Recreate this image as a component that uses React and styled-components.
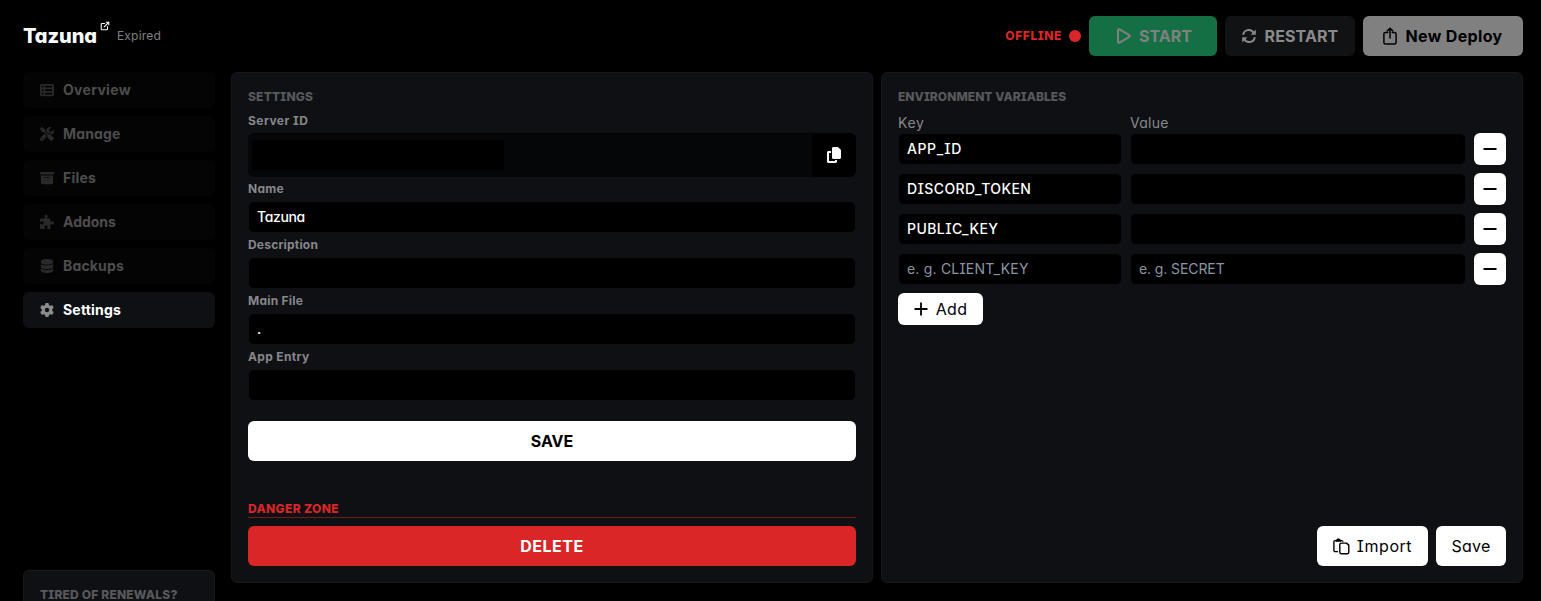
import React from "react";
import styled, { createGlobalStyle } from "styled-components";
import {
  FaTableList,
  FaScrewdriverWrench,
  FaBoxArchive,
  FaPuzzlePiece,
  FaDatabase,
  FaGear,
  FaCopy,
} from "react-icons/fa6";
import { FiExternalLink } from "react-icons/fi";

const Global = createGlobalStyle`
  * { box-sizing: border-box; }
  html, body { margin: 0; background: #000; height: 100%; overflow: hidden; }
  body, input, button {
    font-family: Inter, "Noto Sans", sans-serif;
  }
  button { border: 0; padding: 0; margin: 0; cursor: pointer; }
  svg { display: block; flex: none; }
`;

const Page = styled.div`
  height: 601px;
  overflow: hidden;
  padding: 16px 18px 0 23px;
  color: #fff;
`;

const Header = styled.header`
  height: 40px;
  display: flex;
  align-items: center;
`;

/* Text run with its own tracking; single-storey a and serif capital I. */
const Label = styled.span`
  display: block;
  white-space: nowrap;
  font-size: ${(p) => p.$size || 14}px;
  line-height: ${(p) => p.$line || 20}px;
  font-weight: ${(p) => p.$weight || 400};
  letter-spacing: ${(p) => p.$track || 0}px;
  color: ${(p) => p.$color || "inherit"};
  font-feature-settings: "cv11", "cv08";
`;

const Brand = styled.div`
  display: flex;
  align-items: center;
  flex: 1;
`;

const OpenLink = styled.span`
  align-self: flex-start;
  margin: -1px 7px 0 3px;
`;

const Status = styled.div`
  display: flex;
  align-items: center;
  gap: 7px;
  margin-right: 8px;
`;

const Dot = styled.i`
  width: 12px;
  height: 12px;
  border-radius: 50%;
  background: #da2626;
`;

const Actions = styled.div`
  display: flex;
  gap: 8px;
`;

const Button = styled.button`
  display: flex;
  align-items: center;
  justify-content: center;
  gap: ${(p) => p.$gap || 7}px;
  width: ${(p) => (p.$width ? p.$width + "px" : "100%")};
  height: ${(p) => p.$height || 40}px;
  flex: none;
  border-radius: 6px;
  background: ${(p) => p.$bg || "#fff"};
  color: ${(p) => p.$color || "#000"};
`;

const StartButton = styled(Button)`
  padding-left: 3px;
`;

const SaveButton = styled(Button)`
  margin-top: 20px;
`;

const AddButton = styled(Button)`
  margin-top: 8px;
`;

const CopyButton = styled(Button)`
  border-radius: 0 6px 6px 0;
`;

const Body = styled.div`
  display: grid;
  grid-template-columns: 200px 642px 642px;
  column-gap: 8px;
  margin-top: 16px;
`;

const Sidebar = styled.aside`
  display: flex;
  flex-direction: column;
  height: 529px;
  width: 192px;
`;

const Nav = styled.nav`
  display: flex;
  flex-direction: column;
  gap: 8px;
  flex: 1;
`;

const NavItem = styled.a`
  display: flex;
  align-items: center;
  gap: 9px;
  height: 36px;
  padding-left: 17px;
  border-radius: 6px;
  background: ${(p) => (p.$active ? "#0f1014" : "#040404")};
  color: ${(p) => (p.$active ? "#fff" : "#4d4d4d")};
  svg { color: ${(p) => (p.$active ? "#8c8c8d" : "#292929")}; }
`;

const Promo = styled.div`
  height: 31px;
  overflow: hidden;
  border: 1px solid #18191d;
  border-bottom: 0;
  border-radius: 6px 6px 0 0;
  background: #0f1014;
  padding: 16px 16px 0;
`;

const Panel = styled.section`
  height: 511px;
  display: flex;
  flex-direction: column;
  border: 1px solid #16171b;
  border-radius: 6px;
  background: #0f1014;
  padding: 16px;
`;

const Field = styled.label`
  display: flex;
  flex-direction: column;
  height: 56px;
`;

const ServerField = styled(Field)`
  height: 72px;
  padding-top: 4px;
`;

const Input = styled.input`
  display: block;
  width: 100%;
  min-width: 0;
  height: 32px;
  border: 1px solid #0f1014;
  border-radius: 6px;
  outline: 0;
  background: #000;
  color: #fff;
  padding: 0 8px 1px;
  font-size: 14px;
  font-weight: 500;
  letter-spacing: ${(p) => p.$track || 0}px;
  font-feature-settings: "cv11", "cv08";
  &::placeholder {
    color: #8b96a5;
    opacity: 1;
    font-weight: 400;
    letter-spacing: ${(p) => p.$hintTrack || 0}px;
  }
`;

const ServerId = styled.div`
  display: flex;
  align-items: center;
  height: 44px;
  border-radius: 6px;
  overflow: hidden;
  background: #050608;
`;

const Redacted = styled.div`
  width: 252px;
  height: 30px;
  margin: 0 auto 0 4px;
  background: #000;
`;

const DangerTitle = styled.div`
  margin: 40px 0 8px;
  height: 17px;
  border-bottom: 1px solid #6f1c1f;
`;

const VarGrid = styled.div`
  display: grid;
  grid-template-columns: 224px 336px 32px;
  column-gap: 8px;
  row-gap: 8px;
`;

const VarHead = styled(VarGrid)`
  height: 20px;
  margin-top: 8px;
`;

const Footer = styled.div`
  display: flex;
  justify-content: flex-end;
  gap: 8px;
  margin-top: auto;
`;

const PlayIcon = () => (
  <svg width="14" height="16" viewBox="0 0 14 16" fill="none" stroke="currentColor" strokeWidth="2" strokeLinejoin="round">
    <path d="M1 2.2v11.6c0 .8.8 1.2 1.5.8l9.8-5.8c.7-.4.7-1.2 0-1.6L2.5 1.4C1.8 1 1 1.4 1 2.2Z" />
  </svg>
);

const RestartIcon = () => (
  <svg width="14" height="14" viewBox="0 0 14 14" fill="none" stroke="currentColor" strokeWidth="2">
    <path d="M1.2 5.9A5.6 5.6 0 0 1 11.5 3.6" />
    <path d="M12.8 8.1A5.6 5.6 0 0 1 2.5 10.4" />
    <path d="M13.8.6v5.100H8.700Z" fill="currentColor" stroke="none" />
    <path d="M.2 13.400V8.300h5.100Z" fill="currentColor" stroke="none" />
  </svg>
);

const ShareIcon = () => (
  <svg width="14" height="18" viewBox="0 0 14 18" fill="none" stroke="currentColor" strokeWidth="1.500" strokeLinecap="round" strokeLinejoin="round">
    <path d="M4.700 5.500H2.500C1.500 5.500.9 6.100.9 7v8.500c0 .9.6 1.500 1.600 1.500h9c1 0 1.600-.6 1.600-1.500V7c0-.9-.6-1.500-1.600-1.500H9.300" />
    <path d="M7 11V1.400M4.300 3.900 7 1.200l2.700 2.700" />
  </svg>
);

const PasteIcon = () => (
  <svg width="17" height="17" viewBox="0 0 17 17" fill="none" stroke="currentColor" strokeWidth="1.400" strokeLinejoin="round">
    <path d="M5 13.600H2.200C1.300 13.600.9 13.100.9 12.300V3.900c0-.8.5-1.300 1.300-1.300h6.400c.8 0 1.300.5 1.300 1.200" />
    <path d="M3.200 3V2.200h1C4.400 1.300 4.800 1 5.400 1s1 .3 1.200 1.200h1V3Z" fill="currentColor" />
    <path d="M8.200 5.100h5.300l2.300 2v7.200c0 .9-.5 1.400-1.400 1.400H8.200c-.9 0-1.400-.5-1.400-1.400V6.500c0-.9.5-1.400 1.400-1.400Z" />
  </svg>
);

const MinusIcon = () => (
  <svg width="14" height="14" viewBox="0 0 14 14" stroke="currentColor" strokeWidth="2">
    <path d="M.5 7h13" />
  </svg>
);

const PlusIcon = () => (
  <svg width="14" height="14" viewBox="0 0 14 14" stroke="currentColor" strokeWidth="1.8">
    <path d="M.5 7h13M7 .5v13" />
  </svg>
);

const nav = [
  ["Overview", FaTableList, 0.3],
  ["Manage", FaScrewdriverWrench, 0.15],
  ["Files", FaBoxArchive, 0.2],
  ["Addons", FaPuzzlePiece, 0],
  ["Backups", FaDatabase, 0.15],
  ["Settings", FaGear, 0.2],
];

const fields = [
  ["Name", "Tazuna", 0.3],
  ["Description", "", 0.2],
  ["Main File", ".", 0.25],
  ["App Entry", "", 0.35],
];

const variables = [
  ["APP_ID", 0.6],
  ["DISCORD_TOKEN", 0.42],
  ["PUBLIC_KEY", 0.42],
  ["", 0],
];

export default function App() {
  return (
    <Page>
      <Global />
      <Header>
        <Brand>
          <Label $size={20} $line={28} $weight={800} $track={-0.1}>Tazuna</Label>
          <OpenLink><FiExternalLink size={10} strokeWidth={2.6} /></OpenLink>
          <Label $size={12} $line={16} $color="#808080" $track={0.2}>Expired</Label>
        </Brand>
        <Status>
          <Label $size={12} $weight={800} $track={0.6} $color="#da2626">OFFLINE</Label>
          <Dot />
        </Status>
        <Actions>
          <StartButton $width={128} $gap={8} $bg="#147044" $color="#808080">
            <PlayIcon />
            <Label $size={16} $weight={700} $track={0.05}>START</Label>
          </StartButton>
          <Button $width={130} $gap={9} $bg="#111214" $color="#8a8a8a">
            <RestartIcon />
            <Label $size={16} $weight={700} $track={0.1}>RESTART</Label>
          </Button>
          <Button $width={160} $gap={8} $bg="#808080">
            <ShareIcon />
            <Label $size={16} $weight={700} $track={0.35}>New Deploy</Label>
          </Button>
        </Actions>
      </Header>
      <Body>
        <Sidebar>
          <Nav>
            {nav.map(([name, Icon, track]) => (
              <NavItem key={name} $active={name === "Settings"}>
                <Icon size={14} />
                <Label $weight={700} $track={track}>{name}</Label>
              </NavItem>
            ))}
          </Nav>
          <Promo>
            <Label $size={12} $line={16} $weight={800} $track={0.2} $color="#58595b">TIRED OF RENEWALS?</Label>
          </Promo>
        </Sidebar>
        <Panel>
          <Label $size={12} $line={16} $weight={800} $track={0.2} $color="#58595b">SETTINGS</Label>
          <ServerField>
            <Label $size={12} $line={24} $weight={700} $track={0.45} $color="#878789">Server ID</Label>
            <ServerId>
              <Redacted />
              <CopyButton as="span" $width={44} $height={44} $bg="#000" $color="#fff"><FaCopy size={16} /></CopyButton>
            </ServerId>
          </ServerField>
          {fields.map(([name, value, track]) => (
            <Field key={name}>
              <Label $size={12} $line={24} $weight={700} $track={track} $color="#878789">{name}</Label>
              <Input defaultValue={value} $track={-0.35} />
            </Field>
          ))}
          <SaveButton><Label $size={16} $weight={700}>SAVE</Label></SaveButton>
          <DangerTitle>
            <Label $size={12} $line={16} $weight={800} $track={0.35} $color="#da2626">DANGER ZONE</Label>
          </DangerTitle>
          <Button $bg="#da2626" $color="#fff"><Label $size={16} $weight={700} $track={0.5}>DELETE</Label></Button>
        </Panel>
        <Panel>
          <Label $size={12} $line={16} $weight={800} $track={0.05} $color="#58595b">ENVIRONMENT VARIABLES</Label>
          <VarHead>
            <Label $color="#87888a" $track={0.6}>Key</Label>
            <Label $color="#87888a" $track={0.25}>Value</Label>
          </VarHead>
          <VarGrid>
            {variables.map(([name, track], i) => (
              <React.Fragment key={i}>
                <Input defaultValue={name} placeholder="e. g. CLIENT_KEY" $track={track} $hintTrack={0.2} />
                <Input placeholder={name ? "" : "e. g. SECRET"} $hintTrack={-0.1} />
                <Button $width={32} $height={32}><MinusIcon /></Button>
              </React.Fragment>
            ))}
          </VarGrid>
          <AddButton $width={85} $height={32} $gap={8}><PlusIcon /><Label $size={16} $track={0.3}>Add</Label></AddButton>
          <Footer>
            <Button $width={111}><PasteIcon /><Label $size={16} $track={0.55}>Import</Label></Button>
            <Button $width={70}><Label $size={16} $track={0.2}>Save</Label></Button>
          </Footer>
        </Panel>
      </Body>
    </Page>
  );
}
